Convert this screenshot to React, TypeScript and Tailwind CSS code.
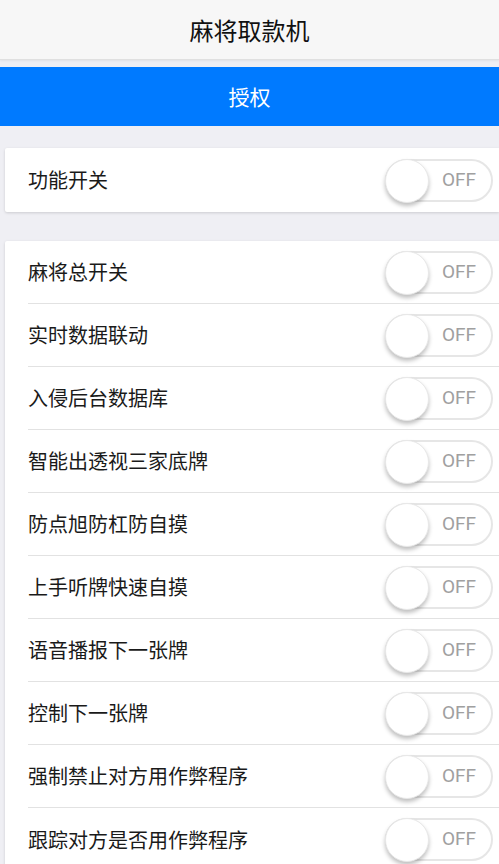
const items = [
  "麻将总开关",
  "实时数据联动",
  "入侵后台数据库",
  "智能出透视三家底牌",
  "防点旭防杠防自摸",
  "上手听牌快速自摸",
  "语音播报下一张牌",
  "控制下一张牌",
  "强制禁止对方用作弊程序",
  "跟踪对方是否用作弊程序",
];

function Toggle() {
  return (
    <div className="relative w-[108px] h-[43px] rounded-full border-2 border-[#e6e6e6] bg-white shrink-0">
      <div className="absolute left-[-2px] top-[-2px] w-[44px] h-[44px] rounded-full bg-white border border-[#e8e8e8] shadow-[0_3px_4px_rgba(0,0,0,0.25)]" />
      <span className="absolute right-[15px] top-0 h-full flex items-center text-[19px] text-[#a0a0a0] font-['Roboto',sans-serif]">
        OFF
      </span>
    </div>
  );
}

function Row({ label, last }: { label: string; last?: boolean }) {
  return (
    <div className="flex items-center h-[63px] pl-[23px] pr-[6px]">
      <div className={"flex-1 h-full flex items-center mr-[-6px] " + (last ? "" : "border-b border-[#e2e2e2]")}>
        <span className="flex-1 text-[20px] text-[#1a1a1a]">{label}</span>
        <div className="pr-[6px]">
          <Toggle />
        </div>
      </div>
    </div>
  );
}

export default function App() {
  return (
    <main className="w-[499px] h-[864px] overflow-hidden bg-[#efeff4] font-['Noto_Sans_CJK_SC','Noto_Sans',sans-serif]">
      <header className="h-[60px] bg-[#f7f7f7] border-b border-[#e0e0e0] shadow-[0_1px_2px_rgba(0,0,0,0.06)] flex items-center justify-center">
        <h1 className="text-[24px] text-[#111]">麻将取款机</h1>
      </header>

      <div className="mt-[7px] h-[59px] bg-[#007aff] flex items-center justify-center text-white text-[21px]">
        授权
      </div>

      <section className="mt-[22px] ml-[5px] bg-white shadow-[0_1px_3px_rgba(0,0,0,0.15)] rounded-l-[2px]">
        <div className="flex items-center h-[64px] pl-[23px] pr-[6px]">
          <span className="flex-1 text-[20px] text-[#1a1a1a]">功能开关</span>
          <Toggle />
        </div>
      </section>

      <section className="mt-[29px] ml-[5px] bg-white shadow-[0_1px_3px_rgba(0,0,0,0.15)] rounded-l-[2px]">
        {items.map((label, i) => (
          <Row key={label} label={label} last={i === items.length - 1} />
        ))}
      </section>
    </main>
  );
}
